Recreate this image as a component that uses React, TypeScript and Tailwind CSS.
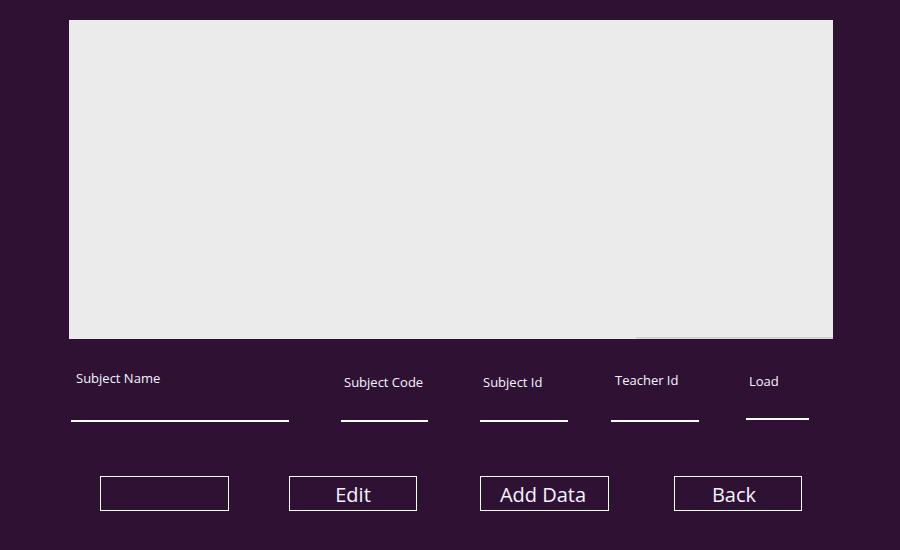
const fields = [
  { label: "Subject Name", ml: "ml-[71px]", w: "w-[218px]", mt: "mt-[10px]", pl: "pl-[5px]", mb: "mb-0" },
  { label: "Subject Code", ml: "ml-[52px]", w: "w-[87px]", mt: "mt-[14px]", pl: "pl-[3px]", mb: "mb-0" },
  { label: "Subject Id", ml: "ml-[52px]", w: "w-[88px]", mt: "mt-[14px]", pl: "pl-[3px]", mb: "mb-0" },
  { label: "Teacher Id", ml: "ml-[43px]", w: "w-[88px]", mt: "mt-[12px]", pl: "pl-[4px]", mb: "mb-0" },
  { label: "Load", ml: "ml-[47px]", w: "w-[63px]", mt: "mt-[13px]", pl: "pl-[3px]", mb: "mb-[2px]" },
];

const buttons = [
  { text: "", ml: "ml-[100px]", w: "w-[129px]", pr: "pr-0" },
  { text: "Edit", ml: "ml-[60px]", w: "w-[128px]", pr: "pr-0" },
  { text: "Add Data", ml: "ml-[63px]", w: "w-[129px]", pr: "pr-[3px]" },
  { text: "Back", ml: "ml-[65px]", w: "w-[128px]", pr: "pr-[8px]" },
];

const App = () => {
  return (
    <div
      className="w-[900px] h-[550px] bg-[#2f1233] overflow-hidden flex flex-col"
      style={{ fontFamily: '"Open Sans", "Noto Sans", sans-serif' }}
    >
      {/* Data grid area */}
      <div className="ml-[69px] mt-[20px] w-[764px] h-[319px] bg-[#ebebeb] flex flex-col justify-end">
        <div className="ml-auto w-[197px] h-[2px] bg-[#d4d4d4]" />
      </div>

      {/* Input fields */}
      <div className="flex mt-[21px] h-[62px]">
        {fields.map((f) => (
          <div key={f.label} className={`${f.ml} ${f.w} flex flex-col`}>
            <span
              className={`${f.mt} ${f.pl} text-[13px] leading-[16px] text-[#f4f4ff] whitespace-nowrap`}
            >
              {f.label}
            </span>
            <div className={`mt-auto ${f.mb} h-[2px] bg-white`} />
          </div>
        ))}
      </div>

      {/* Buttons */}
      <div className="flex mt-[54px]">
        {buttons.map((b, i) => (
          <button
            key={i}
            className={`${b.ml} ${b.w} ${b.pr} h-[35px] border border-white pt-[2px] text-[20px] leading-[29px] text-[#f4f4ff] text-center`}
          >
            {b.text}
          </button>
        ))}
      </div>
    </div>
  );
};

export default App;
